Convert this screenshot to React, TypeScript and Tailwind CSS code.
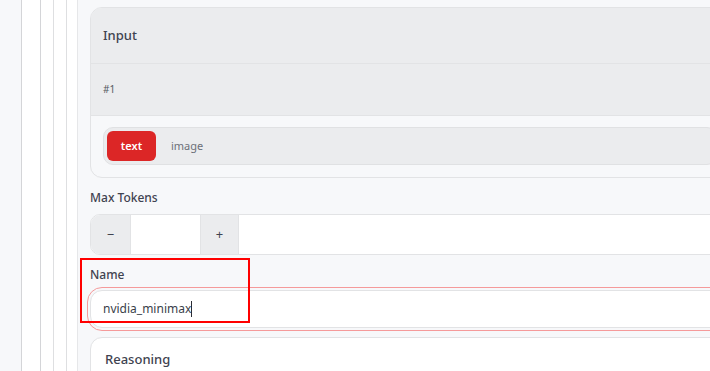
import React from 'react';

const App: React.FC = () => {
  return (
    <div
      className="relative flex h-[371px] w-[710px] overflow-hidden bg-[#f7f8fa] text-[#374151]"
      style={{ fontFamily: '"Noto Sans", "Open Sans", sans-serif' }}
    >
      {/* tree guides */}
      <div className="flex h-full shrink-0">
        <div className="w-[21px] bg-[#f7f8fa]" />
        <div className="w-[19px] border-l border-[#d4d5d8] bg-white" />
        <div className="w-[13px] border-l border-[#d4d5d8] bg-white" />
        <div className="w-[13px] border-l border-[#dedfe1] bg-white" />
        <div className="w-[11px] border-l border-[#dedfe1] bg-white" />
        <div className="w-px bg-[#e6e7e9]" />
      </div>

      {/* main */}
      <div className="flex min-w-[632px] flex-col pl-[12px] pt-[7px]">
        {/* Input card */}
        <div className="w-[640px] shrink-0 overflow-hidden rounded-[12px] border border-[#e2e3e5] bg-[#f7f8fa]">
          <div className="flex h-[56px] items-center border-b border-[#e2e3e5] bg-[#ebecee] px-[12px] text-[13px] font-medium text-[#3f4350]">
            Input
          </div>
          <div className="flex h-[52px] items-center border-b border-[#e2e3e5] bg-[#ebecee] px-[12px] text-[10px] text-[#555a63]">
            #1
          </div>
          <div className="px-[12px] pb-[12px] pt-[11px]">
            <div className="flex h-[38px] items-center rounded-[10px] border border-[#e0e1e3] bg-[#ebecee] px-[3px]">
              <div className="flex h-[30px] w-[49px] items-center justify-center rounded-[6px] bg-[#dc2626] pt-px text-[11px] font-semibold text-white">
                text
              </div>
              <div className="ml-[15px] pt-px text-[11px] text-[#6b7079]">image</div>
            </div>
          </div>
        </div>

        {/* Max Tokens */}
        <div className="mt-[12px] shrink-0 text-[12px] font-medium leading-[16px] text-[#3f4350]">Max Tokens</div>
        <div className="mt-[8px] flex h-[41px] w-[640px] shrink-0 overflow-hidden rounded-l-[10px] border border-[#e2e3e5] bg-white">
          <div className="flex w-[39px] items-center justify-center bg-[#ebecee] text-[13px] text-[#3f4350]">−</div>
          <div className="w-[71px] border-x border-[#e2e3e5] bg-white" />
          <div className="flex w-[38px] items-center justify-center border-r border-[#e2e3e5] bg-[#ebecee] text-[13px] text-[#3f4350]">+</div>
          <div className="flex-1 bg-white" />
        </div>

        {/* Name */}
        <div className="mt-[12px] shrink-0 text-[12px] font-medium leading-[16px] text-[#3f4350]">Name</div>
        <div className="mt-[7px] flex h-[38px] w-[640px] shrink-0 items-center rounded-l-[12px] border border-[#e2e3e5] bg-white px-[12px] text-[12px] text-[#3a3f4a] outline outline-1 outline-offset-2 outline-[#f59a9a]">
          <span>nvidia_minimax</span>
          <span className="h-[16px] w-px bg-[#2a2d36]" />
        </div>

        {/* Reasoning */}
        <div className="mt-[9px] flex h-[60px] w-[640px] shrink-0 items-start rounded-l-[12px] border border-[#e2e3e5] bg-white px-[14px] pt-[12px] text-[13px] font-medium text-[#3f4350]">
          Reasoning
        </div>
      </div>

      {/* annotation highlight */}
      <div className="pointer-events-none absolute left-[80px] top-[258px] h-[65px] w-[170px] border-2 border-[#ff0000]" />
    </div>
  );
};

export default App;
